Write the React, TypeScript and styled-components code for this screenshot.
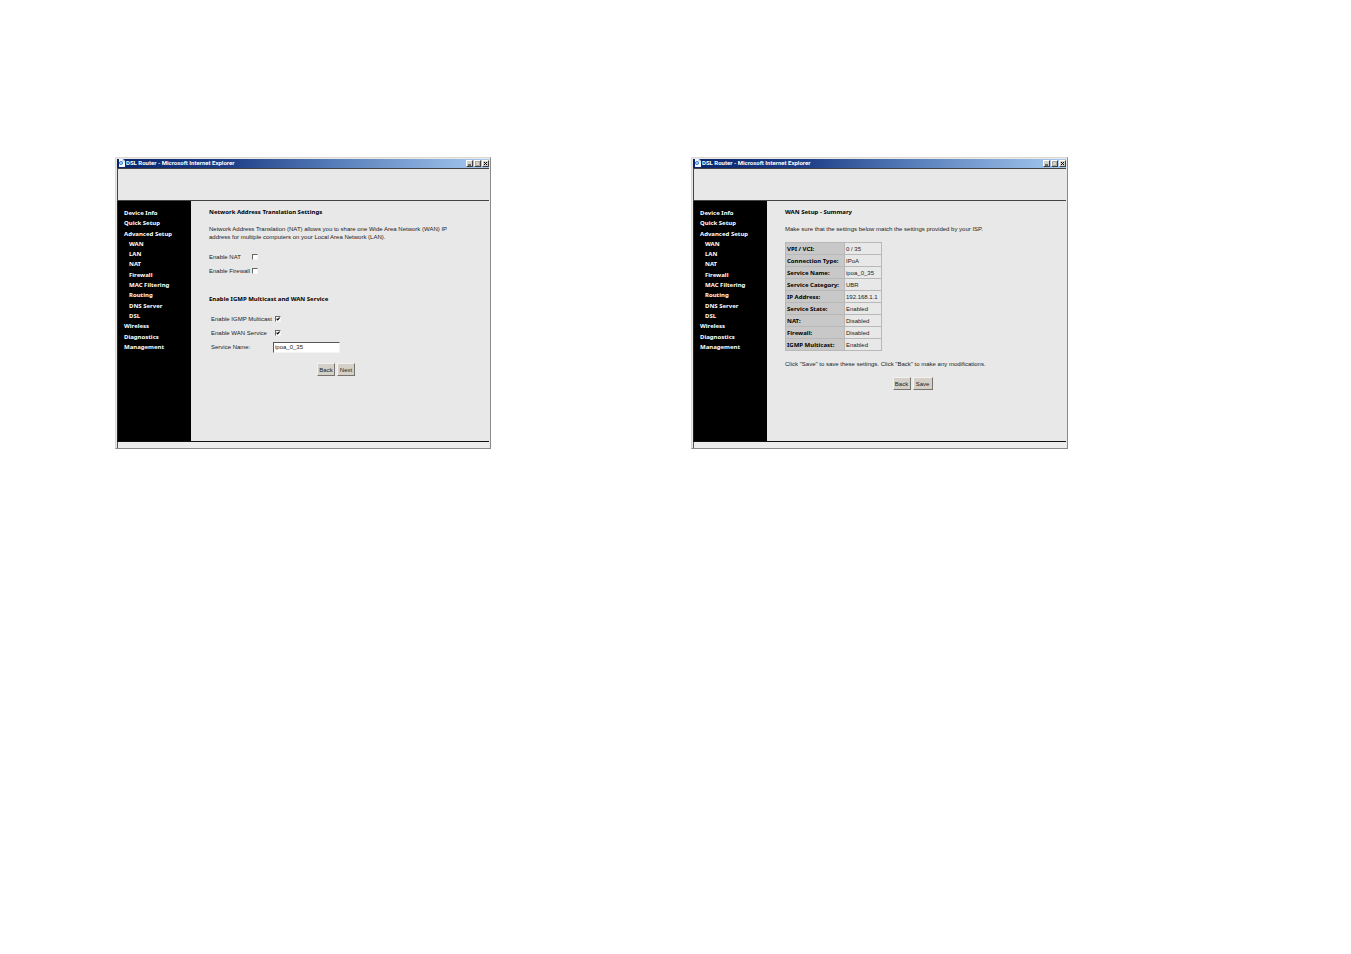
import React from 'react';
import styled, { createGlobalStyle } from 'styled-components';

const boldFace = '"Noto Sans", "Liberation Sans", sans-serif';

const GlobalStyle = createGlobalStyle`
  * { box-sizing: border-box; }
  body {
    margin: 0;
    background: #fff;
    color: #222;
    font-family: "Liberation Sans", sans-serif;
    font-size: 6px;
    line-height: 8px;
  }
`;

const Page = styled.main`
  display: grid;
  grid-template-columns: 376fr 377fr;
  column-gap: 200px;
  align-items: start;
  padding: 157px 283px 157px 115px;
`;

const WindowFrame = styled.section`
  display: flex;
  flex-direction: column;
  min-width: 0;
  min-height: 292px;
  background: #e8e8e8;
  border: 1px solid #8c8a86;
  border-left-color: #dcd9d3;
  border-top-color: #dcd9d3;
  padding: 1px 1px 0 1px;
`;

const TitleBar = styled.header`
  display: flex;
  align-items: flex-start;
  gap: 1px;
  height: 9px;
  padding: 0 0 0 1px;
  background: linear-gradient(90deg, #0a246a 0%, #1e3f88 30%, #5a80bc 60%, #a6caf0 100%);
  color: #fff;
`;

const WindowTitle = styled.h1`
  flex: 1;
  margin: 0;
  font-family: Roboto, "Liberation Sans", sans-serif;
  font-size: 6px;
  font-weight: 700;
  line-height: 8px;
  white-space: nowrap;
`;

const CaptionButton = styled.button`
  display: flex;
  width: 7px;
  height: 7px;
  margin-top: 1px;
  padding: 0;
  border: 1px solid #404040;
  border-left-color: #fff;
  border-top-color: #fff;
  background: #d4d0c8;
`;

const Banner = styled.div`
  height: 33px;
  border-top: 1px solid #444;
  border-bottom: 1px solid #444;
  border-left: 1px solid #444;
`;

const Body = styled.div`
  display: flex;
  flex: 1;
  border-left: 1px solid #222;
  border-bottom: 1px solid #111;
`;

const Sidebar = styled.nav`
  flex: none;
  width: 73px;
  padding: 8px 0 0 6px;
  background: #000;
`;

const NavList = styled.ul`
  display: flex;
  flex-direction: column;
  justify-content: space-between;
  height: 142px;
  margin: 0;
  padding: 0;
  list-style: none;
`;

const NavItem = styled.li<{ $nested?: boolean }>`
  padding-left: ${(p) => (p.$nested ? 5 : 0)}px;
`;

const NavLink = styled.a`
  display: block;
  color: #fff;
  font-family: ${boldFace};
  font-weight: 700;
  text-decoration: none;
  white-space: nowrap;
`;

const Content = styled.div`
  flex: 1;
  min-width: 0;
  padding: 7px 18px 0 18px;
`;

const Heading = styled.h2<{ $top?: number }>`
  margin: ${(p) => p.$top ?? 0}px 0 0;
  color: #000;
  font-family: ${boldFace};
  font-size: 6px;
  font-weight: 700;
  line-height: 8px;
`;

const Paragraph = styled.p`
  max-width: 248px;
  margin: 9px 0 0;
`;

const FieldGroup = styled.div<{ $label: number; $inset?: number }>`
  display: grid;
  grid-template-columns: ${(p) => p.$label}px max-content;
  grid-auto-rows: 14px;
  align-items: center;
  margin: 9px 0 0 ${(p) => p.$inset ?? 0}px;
`;

const Label = styled.label`
  white-space: nowrap;
`;

const CheckBox = styled.input`
  appearance: none;
  width: 6px;
  height: 6px;
  margin: 0 0 0 2px;
  border: 1px solid #f4f4f4;
  border-left-color: #666;
  border-top-color: #666;
  background: #fff;

  &:checked {
    background: #fff url("data:image/svg+xml,%3Csvg xmlns='http://www.w3.org/2000/svg' viewBox='0 0 5 5'%3E%3Cpath d='M.8 2L2.1 3.6L4.5 .8' fill='none' stroke='%23000' stroke-width='1.5'/%3E%3C/svg%3E");
  }
`;

const TextBox = styled.input`
  width: 67px;
  height: 11px;
  padding: 0 1px;
  border: 1px solid #f4f4f4;
  border-left-color: #555;
  border-top-color: #555;
  background: #fff;
  color: #222;
  font: inherit;
`;

const Actions = styled.div`
  display: flex;
  justify-content: center;
  gap: 2px;
  margin-top: 9px;
  padding-right: 8px;
`;

const PushButton = styled.button<{ $width: number }>`
  width: ${(p) => p.$width}px;
  height: 13px;
  padding: 0;
  border: 1px solid #77736c;
  border-left-color: #f4f2ee;
  border-top-color: #f4f2ee;
  background: #d4d0c8;
  color: #222;
  font: inherit;
`;

const SummaryTable = styled.table`
  height: 109px;
  margin-top: 9px;
  border: 1px solid #c4c4c4;
  border-collapse: collapse;

  th,
  td {
    padding: 0 1px;
    border: 1px solid #b8b8b8;
    text-align: left;
    white-space: nowrap;
  }

  th {
    width: 59px;
    background: #c8c8c8;
    color: #000;
    font-family: ${boldFace};
  }

  td {
    width: 37px;
  }
`;

const StatusBar = styled.footer`
  height: 6px;
  border-left: 1px solid #555;
  background: #ececec;
`;

const navigation = [
  { label: 'Device Info' },
  { label: 'Quick Setup' },
  { label: 'Advanced Setup' },
  { label: 'WAN', nested: true },
  { label: 'LAN', nested: true },
  { label: 'NAT', nested: true },
  { label: 'Firewall', nested: true },
  { label: 'MAC Filtering', nested: true },
  { label: 'Routing', nested: true },
  { label: 'DNS Server', nested: true },
  { label: 'DSL', nested: true },
  { label: 'Wireless' },
  { label: 'Diagnostics' },
  { label: 'Management' },
];

const summary = [
  ['VPI / VCI:', '0 / 35'],
  ['Connection Type:', 'IPoA'],
  ['Service Name:', 'ipoa_0_35'],
  ['Service Category:', 'UBR'],
  ['IP Address:', '192.168.1.1'],
  ['Service State:', 'Enabled'],
  ['NAT:', 'Disabled'],
  ['Firewall:', 'Disabled'],
  ['IGMP Multicast:', 'Enabled'],
];

function BrowserIcon() {
  return (
    <svg width="7" height="8" viewBox="0 0 7 8" aria-hidden="true">
      <path d="M1 0H5L7 2V8H1Z" fill="#f6f8fc" />
      <path d="M5 0V2H7" fill="none" stroke="#8da5cc" strokeWidth=".6" />
      <circle cx="3" cy="4" r="1.6" fill="none" stroke="#2f7fd0" strokeWidth=".9" />
      <path d="M1.5 4H4.5" stroke="#2f7fd0" strokeWidth=".7" />
    </svg>
  );
}

function RouterWindow({ children }: { children: React.ReactNode }) {
  return (
    <WindowFrame>
      <TitleBar>
        <BrowserIcon />
        <WindowTitle>DSL Router - Microsoft Internet Explorer</WindowTitle>
        <CaptionButton aria-label="Minimize">
          <svg width="5" height="5"><path d="M1 4H4" stroke="#000" /></svg>
        </CaptionButton>
        <CaptionButton aria-label="Maximize">
          <svg width="5" height="5"><path d="M.5 .5H4.5V4.5H.5Z" fill="none" stroke="#aaa69e" /></svg>
        </CaptionButton>
        <CaptionButton aria-label="Close">
          <svg width="5" height="5"><path d="M1 1L4 4M4 1L1 4" stroke="#000" /></svg>
        </CaptionButton>
      </TitleBar>
      <Banner />
      <Body>
        <Sidebar>
          <NavList>
            {navigation.map((item) => (
              <NavItem key={item.label} $nested={item.nested}>
                <NavLink href="#">{item.label}</NavLink>
              </NavItem>
            ))}
          </NavList>
        </Sidebar>
        <Content>{children}</Content>
      </Body>
      <StatusBar />
    </WindowFrame>
  );
}

export default function App() {
  return (
    <>
      <GlobalStyle />
      <Page>
        <RouterWindow>
          <Heading>Network Address Translation Settings</Heading>
          <Paragraph>
            Network Address Translation (NAT) allows you to share one Wide Area Network (WAN) IP
            address for multiple computers on your Local Area Network (LAN).
          </Paragraph>
          <FieldGroup $label={41}>
            <Label htmlFor="nat">Enable NAT</Label>
            <CheckBox id="nat" type="checkbox" />
            <Label htmlFor="firewall">Enable Firewall</Label>
            <CheckBox id="firewall" type="checkbox" />
          </FieldGroup>
          <Heading $top={17}>Enable IGMP Multicast and WAN Service</Heading>
          <FieldGroup $label={62} $inset={2}>
            <Label htmlFor="igmp">Enable IGMP Multicast</Label>
            <CheckBox id="igmp" type="checkbox" defaultChecked />
            <Label htmlFor="wan">Enable WAN Service</Label>
            <CheckBox id="wan" type="checkbox" defaultChecked />
            <Label htmlFor="service">Service Name:</Label>
            <TextBox id="service" type="text" defaultValue="ipoa_0_35" />
          </FieldGroup>
          <Actions>
            <PushButton $width={18}>Back</PushButton>
            <PushButton $width={18}>Next</PushButton>
          </Actions>
        </RouterWindow>
        <RouterWindow>
          <Heading>WAN Setup - Summary</Heading>
          <Paragraph>
            Make sure that the settings below match the settings provided by your ISP.
          </Paragraph>
          <SummaryTable>
            <tbody>
              {summary.map(([name, value]) => (
                <tr key={name}>
                  <th scope="row">{name}</th>
                  <td>{value}</td>
                </tr>
              ))}
            </tbody>
          </SummaryTable>
          <Paragraph>
            Click "Save" to save these settings. Click "Back" to make any modifications.
          </Paragraph>
          <Actions>
            <PushButton $width={18}>Back</PushButton>
            <PushButton $width={20}>Save</PushButton>
          </Actions>
        </RouterWindow>
      </Page>
    </>
  );
}
